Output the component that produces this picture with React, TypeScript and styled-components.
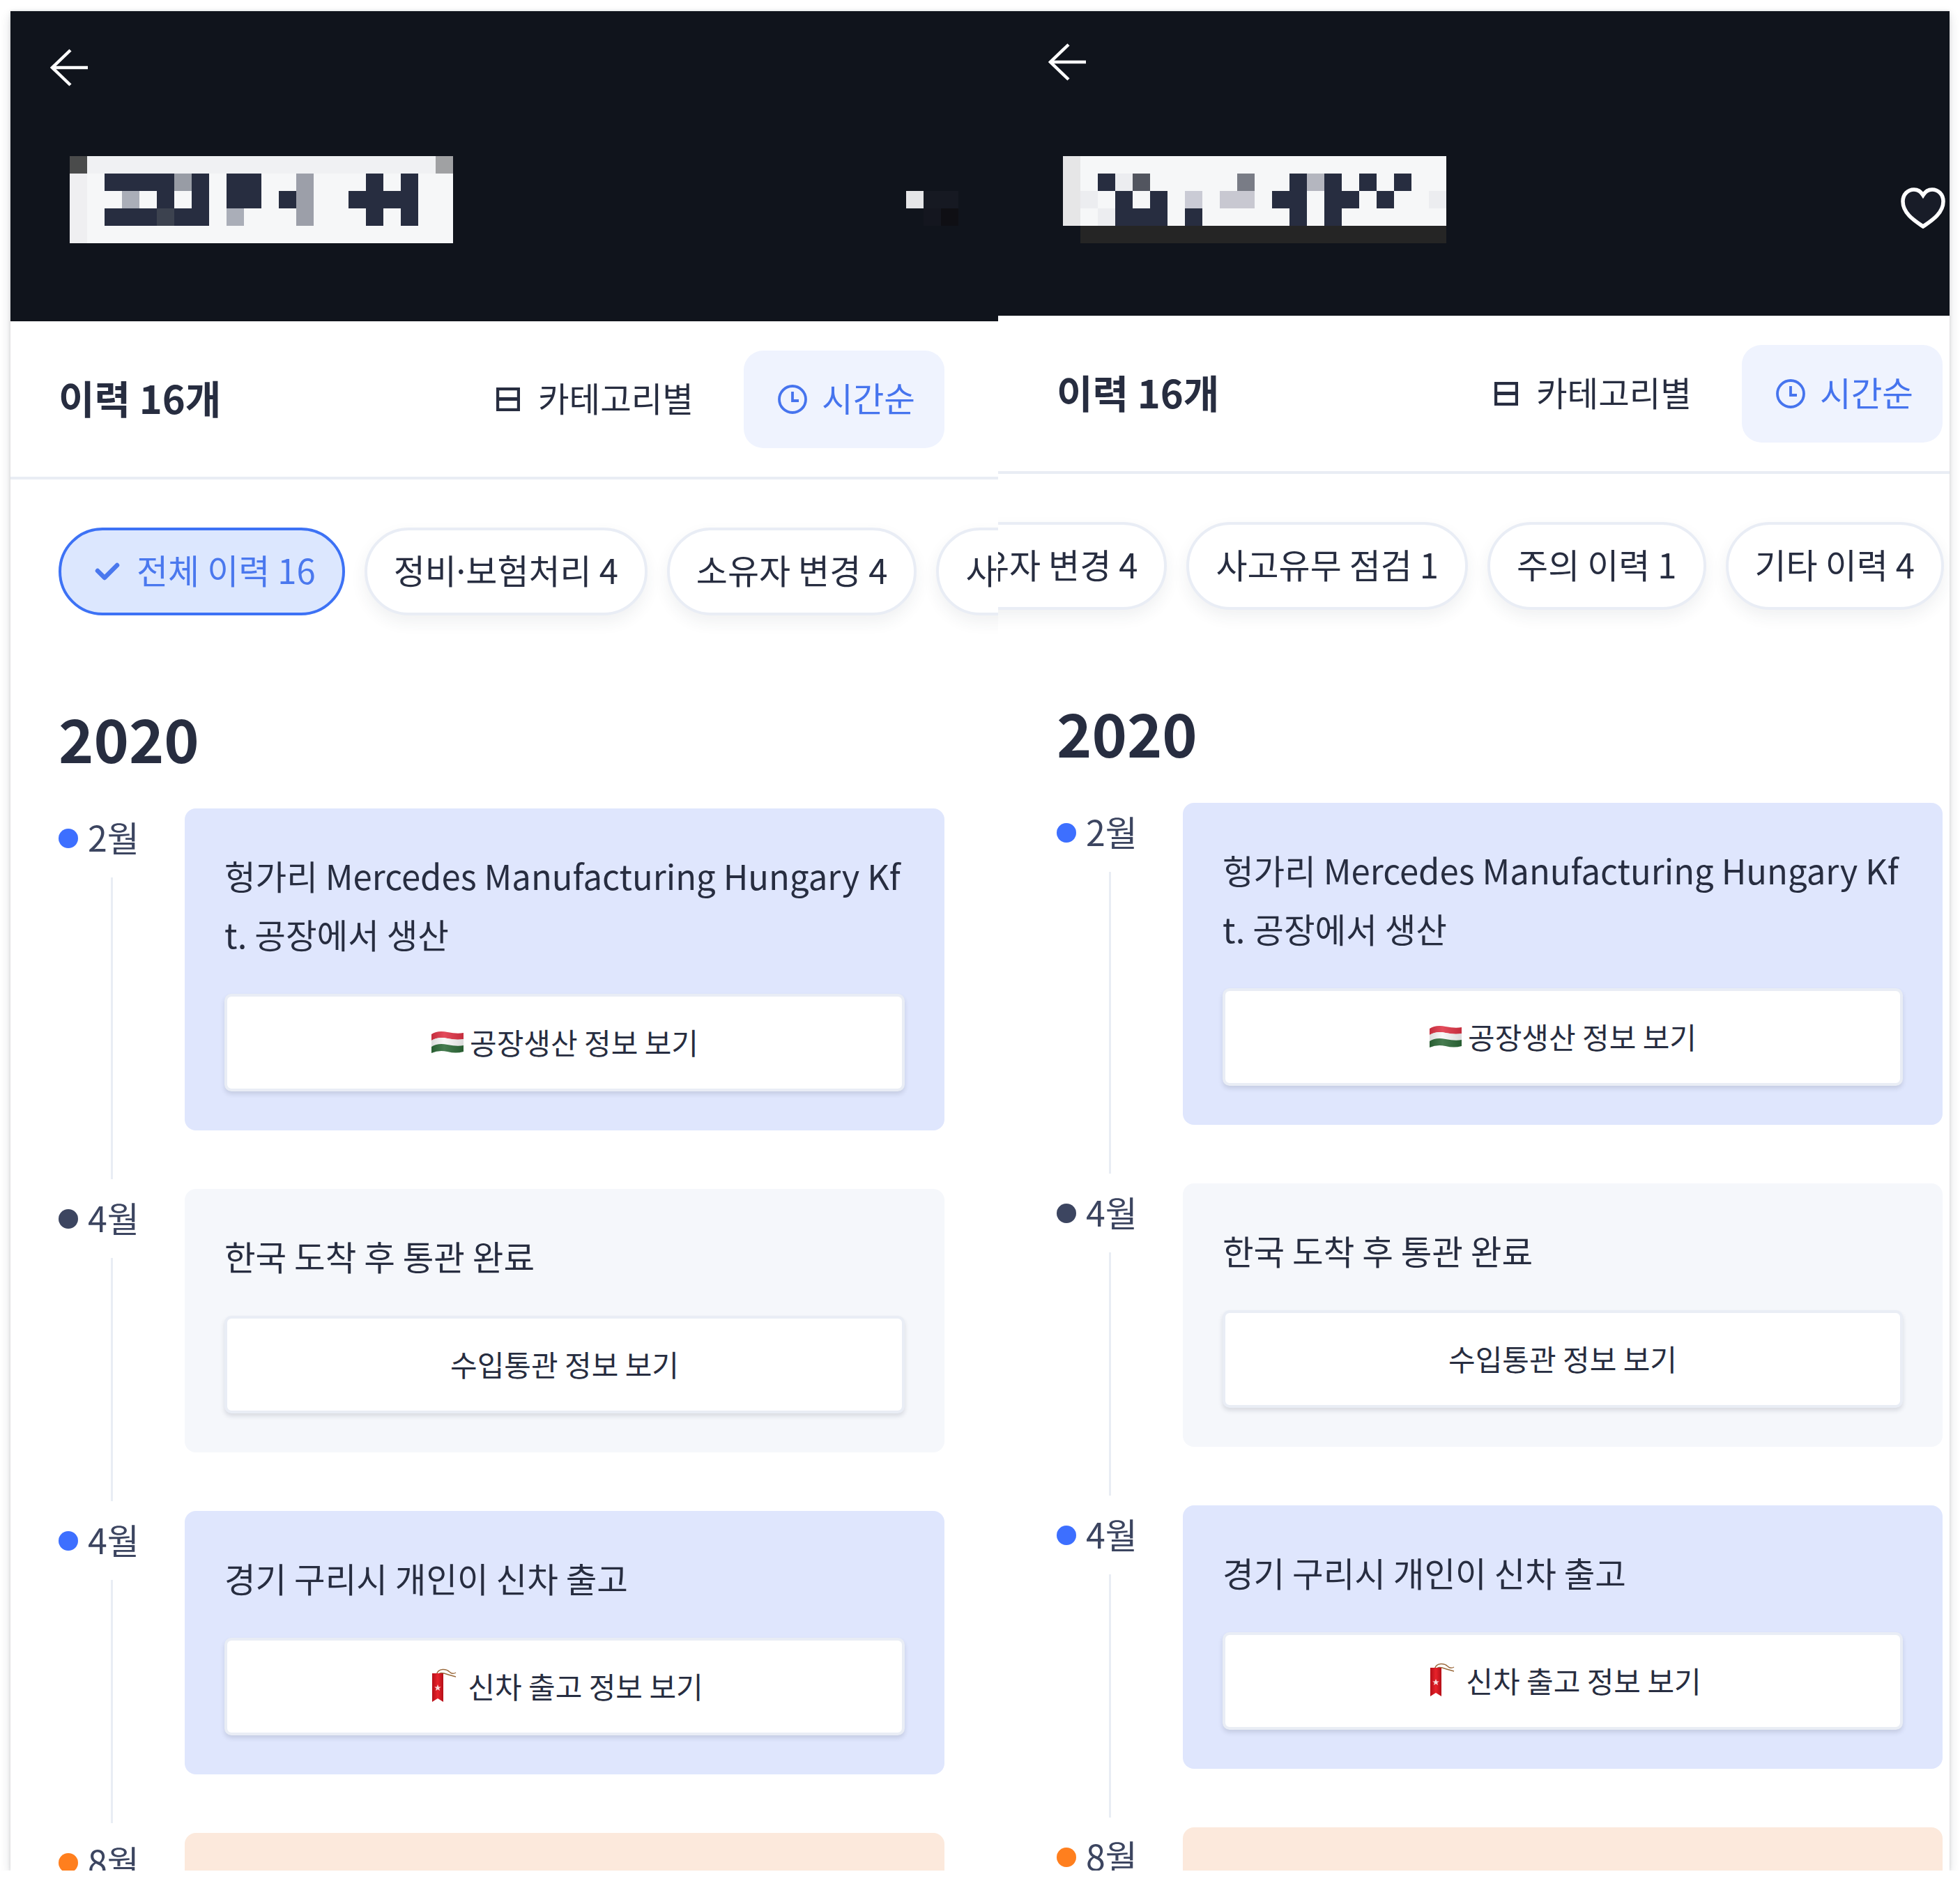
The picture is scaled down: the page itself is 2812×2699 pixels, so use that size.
import React from "react";
import styled, {createGlobalStyle} from "styled-components";

const GlobalStyle = createGlobalStyle`
  html, body {
    margin: 0;
    background: #fff;
    font-family: "Noto Sans CJK KR", "Noto Sans", sans-serif;
    color: #272d40;
  }
`;

const Screen = styled.div`
  display: flex;
  width: 2782px;
  height: 2668px;
  margin: 16px 0 0 15px;
  box-shadow: 0 6px 14px rgba(30, 35, 50, 0.16), 0 0 4px rgba(30, 35, 50, 0.14);
`;

const Panel = styled.section<{$width: number}>`
  width: ${p => p.$width}px;
  flex-shrink: 0;
  height: 100%;
  overflow: hidden;
  background: #fff;
`;

const Header = styled.header<{$height: number; $arrowTop: number; $arrowLeft: number}>`
  height: ${p => p.$height}px;
  box-sizing: border-box;
  background: #10141c;
  padding: ${p => p.$arrowTop}px 0 0 ${p => p.$arrowLeft}px;
`;

const BackIcon = styled.svg`
  display: block;
  width: 54px;
  height: 54px;
  color: #fff;
`;

const TitleRow = styled.div<{$left: number; $top: number}>`
  display: flex;
  justify-content: space-between;
  align-items: flex-start;
  margin: ${p => p.$top}px 0 0 ${p => p.$left}px;
`;

const Mosaic = styled.svg`
  display: block;
  flex-shrink: 0;
  shape-rendering: crispEdges;
`;

const CornerMosaic = styled(Mosaic)`
  margin: 50px 57px 0 0;
`;

const Heart = styled.svg`
  display: block;
  width: 64px;
  height: 59px;
  margin: 45px 6px 0 0;
`;

const TabBar = styled.div<{$left: number; $right: number}>`
  display: flex;
  align-items: center;
  height: 223px;
  padding: 0 ${p => p.$right}px 0 ${p => p.$left}px;
  border-bottom: 4px solid #e9edf4;
`;

const TabTitle = styled.h2`
  flex: 1;
  margin: 0 0 6px;
  font-size: 56px;
  font-weight: 700;
  line-height: 1;
`;

const TabButton = styled.div<{$active?: boolean}>`
  display: flex;
  align-items: center;
  justify-content: center;
  gap: ${p => (p.$active ? 21 : 26)}px;
  box-sizing: border-box;
  height: 140px;
  width: ${p => (p.$active ? "288px" : "auto")};
  padding: ${p => (p.$active ? "0 0 0 7px" : "0 72px 0 0")};
  border-radius: 28px;
  font-size: 48.5px;
  line-height: 1;
  background: ${p => (p.$active ? "#eff3fe" : "transparent")};
  color: ${p => (p.$active ? "#4674ee" : "#272d40")};
`;

const TabLabel = styled.span`
  position: relative;
  top: -2px;
`;

const TabIcon = styled.svg`
  display: block;
  flex-shrink: 0;
`;

const ChipRow = styled.div<{$left: number; $right: number; $end?: boolean}>`
  display: flex;
  justify-content: ${p => (p.$end ? "flex-end" : "flex-start")};
  gap: 28px;
  overflow: hidden;
  padding: 69px ${p => p.$right}px 40px ${p => p.$left}px;
`;

const Chip = styled.div<{$active?: boolean}>`
  display: flex;
  align-items: center;
  flex-shrink: 0;
  gap: 24px;
  box-sizing: border-box;
  height: 126px;
  padding: 0 ${p => (p.$active ? "38px 8px 48px" : "38px 8px")};
  border-radius: 63px;
  border: 4px solid ${p => (p.$active ? "#3d72f5" : "#e9edf5")};
  background: ${p => (p.$active ? "#dce7fe" : "#fff")};
  color: ${p => (p.$active ? "#4a78ee" : "#272d40")};
  font-size: 49px;
  line-height: 1;
  white-space: nowrap;
  box-shadow: ${p => (p.$active ? "none" : "0 10px 22px rgba(40, 50, 70, 0.07)")};
`;

const MiddleDot = styled.span`
  margin: 0 -7px;
`;

const CheckMark = styled.svg`
  display: block;
  flex-shrink: 0;
  margin-top: 8px;
`;

const Content = styled.div<{$left: number; $right: number}>`
  padding: 0 ${p => p.$right}px 0 ${p => p.$left}px;
`;

const Year = styled.h1`
  margin: 81px 0 48px;
  font-size: 85.5px;
  font-weight: 700;
  line-height: 108px;
`;

const Row = styled.article`
  display: grid;
  grid-template-columns: 181px 1fr;
  padding-bottom: 84px;
`;

const MonthColumn = styled.div`
  display: flex;
  flex-direction: column;
  margin-bottom: -70px;
`;

const Month = styled.div`
  display: flex;
  align-items: center;
  gap: 14px;
  height: 86px;
  font-size: 50px;
  line-height: 1;
  color: #3c4560;
`;

const MonthLabel = styled.span`
  margin-top: -7px;
`;

const Dot = styled.span<{$color: string}>`
  width: 28px;
  height: 28px;
  border-radius: 50%;
  background: ${p => p.$color};
`;

const Rail = styled.div`
  flex: 1;
  width: 3px;
  margin: 13px 0 0 75px;
  background: #e9edf4;
`;

const Card = styled.div<{$bg: string}>`
  box-sizing: border-box;
  min-height: 250px;
  padding: 54px 57px 56px;
  border-radius: 16px;
  background: ${p => p.$bg};
`;

const CardText = styled.p`
  margin: 0 0 44px;
  font-size: 48.5px;
  line-height: 84px;
  word-break: break-all;
`;

const LatinRun = styled.span`
  font-size: 49px;
`;

const CardButton = styled.div`
  display: flex;
  align-items: center;
  justify-content: center;
  gap: 8px;
  box-sizing: border-box;
  height: 140px;
  padding-bottom: 3px;
  border-radius: 10px;
  border: 4px solid #e9edf5;
  background: #fff;
  font-size: 42px;
  line-height: 1;
  box-shadow: 0 4px 6px rgba(40, 50, 70, 0.14);
`;

const FlagIcon = styled.svg`
  display: block;
  flex-shrink: 0;
`;

const RibbonIcon = styled.svg`
  display: block;
  flex-shrink: 0;
  margin: 0 8px 0 8px;
`;

const BackArrow = () => (
    <BackIcon viewBox="0 0 54 54" fill="none" stroke="currentColor" strokeWidth="4.5">
        <path d="M29 2 L3 27 L29 52"/>
        <path d="M4 27 H54"/>
    </BackIcon>
);

const LayoutIcon = () => (
    <TabIcon width="34" height="34" viewBox="0 0 34 34" fill="none" stroke="currentColor">
        <rect x="2" y="2" width="30" height="30" strokeWidth="4.4"/>
        <path d="M0 16.5 H34" strokeWidth="4.8"/>
    </TabIcon>
);

const ClockIcon = () => (
    <TabIcon width="42" height="42" viewBox="0 0 42 42" fill="none" stroke="currentColor" strokeWidth="3.8">
        <circle cx="21" cy="21" r="19"/>
        <path d="M21 10 V23 H30"/>
    </TabIcon>
);

const Tick = () => (
    <CheckMark width="36" height="28" viewBox="0 0 36 28" fill="none" stroke="currentColor" strokeWidth="6.5" strokeLinecap="round" strokeLinejoin="round">
        <path d="M4 13 L14 23 L32 5"/>
    </CheckMark>
);

const HungaryFlag = () => (
    <FlagIcon width="48" height="36" viewBox="0 0 48 36">
        <defs>
            <linearGradient id="flagShade" x1="0" x2="1" y1="0" y2="0">
                <stop offset="0" stopColor="#000" stopOpacity="0.12"/>
                <stop offset="0.4" stopColor="#fff" stopOpacity="0.12"/>
                <stop offset="1" stopColor="#000" stopOpacity="0.12"/>
            </linearGradient>
        </defs>
        <path d="M1 7 Q10 1 24 4 T47 5 V14 Q36 16 24 13 T1 16 Z" fill="#df3345"/>
        <path d="M1 16 Q10 10 24 13 T47 14 V23 Q36 25 24 22 T1 25 Z" fill="#f8f8f8"/>
        <path d="M1 25 Q10 19 24 22 T47 23 V32 Q36 35 24 32 T1 34 Z" fill="#2d6a38"/>
        <path d="M1 7 Q10 1 24 4 T47 5 V32 Q36 35 24 32 T1 34 Z" fill="url(#flagShade)"/>
    </FlagIcon>
);

const RibbonTag = () => (
    <RibbonIcon width="36" height="49" viewBox="0 0 36 49">
        <defs>
            <linearGradient id="ribbonShade" x1="0" x2="1" y1="0" y2="0">
                <stop offset="0" stopColor="#b40f18"/>
                <stop offset="0.5" stopColor="#e8222a"/>
                <stop offset="1" stopColor="#b40f18"/>
            </linearGradient>
        </defs>
        <path d="M7 9 Q9 2 16 1.5 Q22 1 26 5 T35 6" fill="none" stroke="#9a6a3c" strokeWidth="1.4"/>
        <path d="M8 10 Q12 5 18 7 T35 12" fill="none" stroke="#9a6a3c" strokeWidth="1.4"/>
        <path d="M1 7 H17 V48 L9 43 L1 48 Z" fill="url(#ribbonShade)"/>
        <path d="M9 23 L10.3 26.4 L13.8 26.4 L11 28.6 L12 32 L9 30 L6 32 L7 28.6 L4.2 26.4 L7.7 26.4 Z" fill="#f6dede"/>
    </RibbonIcon>
);

const palette: Record<string, string> = {
    D: "#272d40", G: "#9c9fa9", H: "#aaaeb8", L: "#f6f7f8", E: "#efeff1", C: "#f0f1f3",
    a: "#4a4b4b", b: "#a0a1a3", c: "#989ca5", d: "#3c424f", e: "#e6e6e7", f: "#ecedf0",
    g: "#52555f", h: "#797c86", i: "#b4b6bf", j: "#cacbd5", k: "#c8c8d1", n: "#252525",
    p: "#161922", q: "#14161f", r: "#0f0f14", s: "#e5e5e7",
};

const leftMosaic = [
    "aCCCCCCCCCCCCCCCCCCCCb",
    "ELDDDDcDLDDLLGLLLDLDLL",
    "ELLHLDLDLDDLDGLLDDDDLL",
    "ELDDDdDDLHLLLGLLLDLDLL",
    "ELLLLLLLLLLLLLLLLLLLLL",
];

const rightMosaic = [
    "eLLLLLLLLLLLLLLLLLLLLL",
    "eLDfgLLLLLhLLDiDLDLDLL",
    "efLDLDLjLkkLDDLDDLDLLf",
    "eLfDDDLDLLLLLDLDLLLLLL",
    ".nnnnnnnnnnnnnnnnnnnnn",
];

const cornerMosaic = ["spp", ".qr"];

const pixelRects = (rows: string[]) => rows.flatMap((row, y) =>
    row.split("").map((cell, x) => cell === "." ? null :
        <rect key={`${x}-${y}`} x={x * 25} y={y * 25} width="25" height="25" fill={palette[cell]}/>)
);

const TitleMosaic: React.FC<{rows: string[]}> = ({rows}) => (
    <Mosaic width={rows[0].length * 25} height={rows.length * 25}>{pixelRects(rows)}</Mosaic>
);

const blue = "#dfe6fd";
const gray = "#f5f7fb";
const orange = "#fce9dc";

const history = [
    {
        month: "2월", dot: "#3d6fff", bg: blue,
        text: <>헝가리 <LatinRun>Mercedes Manufacturing Hungary Kft.</LatinRun> 공장에서 생산</>,
        button: "공장생산 정보 보기", icon: <HungaryFlag/>,
    },
    {month: "4월", dot: "#3c4560", bg: gray, text: "한국 도착 후 통관 완료", button: "수입통관 정보 보기"},
    {month: "4월", dot: "#3d6fff", bg: blue, text: "경기 구리시 개인이 신차 출고", button: "신차 출고 정보 보기", icon: <RibbonTag/>},
    {month: "8월", dot: "#ff7f1e", bg: orange},
];

const Timeline = () => (
    <>
        <Year>2020</Year>
        {history.map((item, i) => (
            <Row key={i}>
                <MonthColumn>
                    <Month><Dot $color={item.dot}/><MonthLabel>{item.month}</MonthLabel></Month>
                    {i < history.length - 1 && <Rail/>}
                </MonthColumn>
                <Card $bg={item.bg}>
                    {item.text && <CardText>{item.text}</CardText>}
                    {item.button && <CardButton>{item.icon}{item.button}</CardButton>}
                </Card>
            </Row>
        ))}
    </>
);

const Tabs = () => (
    <>
        <TabTitle>이력 16개</TabTitle>
        <TabButton><LayoutIcon/><TabLabel>카테고리별</TabLabel></TabButton>
        <TabButton $active><ClockIcon/><TabLabel>시간순</TabLabel></TabButton>
    </>
);

const App: React.FC = () => (
    <>
        <GlobalStyle/>
        <Screen>
            <Panel $width={1417}>
                <Header $height={445} $arrowTop={54} $arrowLeft={57}>
                    <BackArrow/>
                    <TitleRow $left={28} $top={100}>
                        <TitleMosaic rows={leftMosaic}/>
                        <CornerMosaic width="75" height="50">{pixelRects(cornerMosaic)}</CornerMosaic>
                    </TitleRow>
                </Header>
                <TabBar $left={69} $right={77}><Tabs/></TabBar>
                <ChipRow $left={69} $right={0}>
                    <Chip $active><Tick/><span>전체 이력 16</span></Chip>
                    <Chip><span>정비<MiddleDot>·</MiddleDot>보험처리 4</span></Chip>
                    <Chip>소유자 변경 4</Chip>
                    <Chip>사고유무 점검 1</Chip>
                </ChipRow>
                <Content $left={69} $right={77}><Timeline/></Content>
            </Panel>
            <Panel $width={1365}>
                <Header $height={437} $arrowTop={46} $arrowLeft={72}>
                    <BackArrow/>
                    <TitleRow $left={21} $top={108}>
                        <TitleMosaic rows={rightMosaic}/>
                        <Heart viewBox="0 0 64 59">
                            <path d="M32 56 C22 49 3 38 3 20 C3 10 10 3 19 3 C25 3 29 6 32 11 C35 6 39 3 45 3 C54 3 61 10 61 20 C61 38 42 49 32 56 Z" fill="#181c28" stroke="#fff" strokeWidth="5.5"/>
                        </Heart>
                    </TitleRow>
                </Header>
                <TabBar $left={84} $right={10}><Tabs/></TabBar>
                <ChipRow $left={0} $right={8} $end>
                    <Chip>소유자 변경 4</Chip>
                    <Chip>사고유무 점검 1</Chip>
                    <Chip>주의 이력 1</Chip>
                    <Chip>기타 이력 4</Chip>
                </ChipRow>
                <Content $left={84} $right={10}><Timeline/></Content>
            </Panel>
        </Screen>
    </>
);

export default App;
